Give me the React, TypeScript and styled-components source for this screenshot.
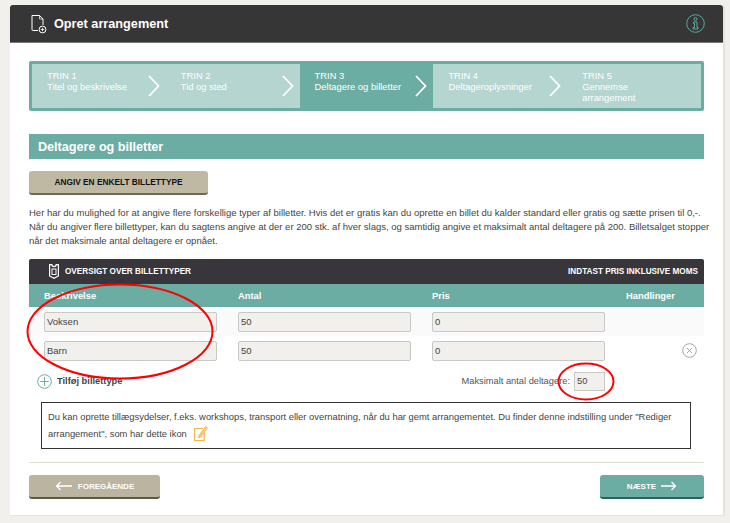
import React from 'react';
import styled, { createGlobalStyle } from 'styled-components';

const GlobalStyle = createGlobalStyle`
  html, body {
    margin: 0;
    padding: 0;
    background: #f1f0ec;
    font-family: "Liberation Sans", Arial, sans-serif;
    color: #444;
  }
`;

const steps = [
  { label: 'TRIN 1', title: 'Titel og beskrivelse' },
  { label: 'TRIN 2', title: 'Tid og sted' },
  { label: 'TRIN 3', title: 'Deltagere og billetter', active: true },
  { label: 'TRIN 4', title: 'Deltageroplysninger' },
  { label: 'TRIN 5', title: 'Gennemse arrangement' },
];

const rows = [
  { name: 'Voksen', count: '50', price: '0', shaded: true },
  { name: 'Barn', count: '50', price: '0', removable: true },
];

const App = () => {
  return (
    <>
      <GlobalStyle />
      <Page>
        <Card>
          <Header>
            <HeaderTitle>
              <svg width="16" height="20" viewBox="0 0 16 20" fill="none" stroke="#fff" strokeWidth="1">
                <path d="M7 16.500H2a1 1 0 0 1-1-1V1.500h7.500l3.500 3.500v6" />
                <path d="M8.500 1.500v3.500H12" strokeWidth="0.7" />
                <circle cx="11.500" cy="15.500" r="3.400" />
                <path d="M9.800 15.500h3.400M11.500 13.800v3.400" strokeWidth="0.8" />
              </svg>
              <h1>Opret arrangement</h1>
            </HeaderTitle>
            <svg width="19" height="19" viewBox="0 0 19 19" fill="none" stroke="#5aa9a0" strokeWidth="1">
              <circle cx="9.500" cy="9.500" r="8.800" />
              <circle cx="9.500" cy="5" r="1.500" />
              <path d="M7.500 8h3.500v5.500h1v1.500H7v-1.500h1.500V9.500h-1z" />
            </svg>
          </Header>

          <Content>
            <Stepper>
              {steps.map((step, i) => (
                <Step key={step.label} $active={step.active}>
                  <StepText>
                    {step.label}
                    <br />
                    {step.title}
                  </StepText>
                  {i < steps.length - 1 && (
                    <StepArrow width="12" height="22" viewBox="0 0 12 22" fill="none" stroke="#fff" strokeWidth="1.800">
                      <path d="M1 1l9.500 10L1 21" />
                    </StepArrow>
                  )}
                </Step>
              ))}
            </Stepper>

            <SectionTitle>Deltagere og billetter</SectionTitle>
            <SingleTicketButton>ANGIV EN ENKELT BILLETTYPE</SingleTicketButton>

            <Intro>
              Her har du mulighed for at angive flere forskellige typer af billetter. Hvis det er gratis kan du oprette en billet du kalder standard eller gratis og sætte prisen til 0,-.
              <br />
              Når du angiver flere billettyper, kan du sagtens angive at der er 200 stk. af hver slags, og samtidig angive et maksimalt antal deltagere på 200. Billetsalget stopper
              <br />
              når det maksimale antal deltagere er opnået.
            </Intro>

            <TableBar>
              <TableBarTitle>
                <svg width="10" height="15" viewBox="0 0 10 15" fill="none" stroke="#fff" strokeWidth="1.200">
                  <path d="M.6.600h2.200a2.200 2 0 0 0 4.400 0h2.200v11.400L5 14.300.6 12z" />
                  <rect x="3" y="5" width="4" height="5.500" strokeWidth="1" />
                </svg>
                OVERSIGT OVER BILLETTYPER
              </TableBarTitle>
              <span>INDTAST PRIS INKLUSIVE MOMS</span>
            </TableBar>
            <TableHead>
              <span>Beskrivelse</span>
              <span>Antal</span>
              <span>Pris</span>
              <span>Handlinger</span>
            </TableHead>
            {rows.map((row) => (
              <TicketRow key={row.name} $shaded={row.shaded}>
                <FieldBox>{row.name}</FieldBox>
                <FieldBox>{row.count}</FieldBox>
                <FieldBox>{row.price}</FieldBox>
                {row.removable && (
                  <RemoveIcon width="15" height="15" viewBox="0 0 15 15" fill="none" stroke="#a3a3a0" strokeWidth="1">
                    <circle cx="7.500" cy="7.500" r="6.800" />
                    <path d="M5 5l5 5M10 5l-5 5" />
                  </RemoveIcon>
                )}
              </TicketRow>
            ))}

            <AddRow>
              <AddLink>
                <svg width="15" height="15" viewBox="0 0 15 15" fill="none" stroke="#6bada3" strokeWidth="1">
                  <circle cx="7.500" cy="7.500" r="6.800" />
                  <path d="M7.500 3.200v8.600M3.200 7.500h8.600" />
                </svg>
                Tilføj billettype
              </AddLink>
              <MaxField>
                Maksimalt antal deltagere:
                <MaxInput>50</MaxInput>
              </MaxField>
            </AddRow>

            <Notice>
              Du kan oprette tillægsydelser, f.eks. workshops, transport eller overnatning, når du har gemt arrangementet. Du finder denne indstilling under "Rediger
              <br />
              arrangement", som har dette ikon
              <svg width="14" height="16" viewBox="0 0 14 16" fill="none" stroke="#f3b64f" strokeWidth="1.200">
                <path d="M9 3.500H.6v12h9.600V8" />
                <path d="M5 10.500l-.6 2.300 2.300-.7L13.400 3 11.800 1.400z" fill="#f6cf8a" strokeWidth="1" />
              </svg>
            </Notice>

            <Divider />

            <Footer>
              <NavButton $tone="sand">
                <svg width="18" height="10" viewBox="0 0 18 10" fill="none" stroke="#fff" strokeWidth="1.300">
                  <path d="M17 5H1.500M5.500 1L1.500 5l4 4" />
                </svg>
                FOREGÅENDE
              </NavButton>
              <NavButton $tone="teal">
                NÆSTE
                <svg width="16" height="10" viewBox="0 0 16 10" fill="none" stroke="#fff" strokeWidth="1.300">
                  <path d="M0 5h14.500M10.500 1l4 4-4 4" />
                </svg>
              </NavButton>
            </Footer>
          </Content>

          <Annotation width="713" height="510" viewBox="0 0 713 510" fill="none" stroke="#f00" strokeWidth="2">
            <ellipse cx="110" cy="326.500" rx="92.500" ry="47" />
            <ellipse cx="576" cy="376.500" rx="27.500" ry="18" />
          </Annotation>
        </Card>
      </Page>
    </>
  );
};

export default App;

const Page = styled.div`
  padding: 5px 0 8px 10px;
`;

const Card = styled.div`
  position: relative;
  box-sizing: border-box;
  width: 715px;
  height: 511px;
  background: #fff;
  border-right: 2px solid #e4e3de;
  border-bottom: 1px solid #e4e3de;
  border-radius: 3px 3px 0 0;
`;

const Header = styled.header`
  box-sizing: border-box;
  height: 38px;
  padding: 0 18px 0 21px;
  display: flex;
  align-items: center;
  justify-content: space-between;
  background: #363636;
  border-bottom: 1px solid #777;
  border-radius: 3px 3px 0 0;
`;

const HeaderTitle = styled.div`
  display: flex;
  align-items: center;
  gap: 7px;
  h1 {
    margin: 0;
    font-size: 12.700px;
    font-weight: 700;
    color: #fff;
  }
`;

const Content = styled.div`
  padding: 18px 19px 0;
`;

const Stepper = styled.div`
  display: flex;
  height: 50px;
  box-sizing: border-box;
  border: 3px solid #6bada3;
  border-radius: 2px;
  background: #b4d5d0;
`;

const Step = styled.div<{ $active?: boolean }>`
  position: relative;
  flex: 1;
  box-sizing: border-box;
  padding: 6px 26px 0 15px;
  background: ${(p) => (p.$active ? '#6bada3' : 'transparent')};
`;

const StepText = styled.div`
  font-size: 9.400px;
  line-height: 11px;
  color: #fff;
`;

const StepArrow = styled.svg`
  position: absolute;
  right: 6px;
  top: 11px;
`;

const SectionTitle = styled.h2`
  box-sizing: border-box;
  height: 25px;
  margin: 23px 0 12px;
  padding-left: 9px;
  font-size: 12.600px;
  font-weight: 700;
  line-height: 26px;
  color: #fff;
  background: #6bada3;
`;

const SingleTicketButton = styled.button`
  display: block;
  box-sizing: border-box;
  width: 179px;
  height: 24px;
  padding: 0;
  border: 0;
  border-bottom: 2px solid #6f6757;
  border-radius: 3px;
  font-family: inherit;
  font-size: 8.300px;
  font-weight: 700;
  color: #111;
  background: #bfb9a3;
`;

const Intro = styled.p`
  margin: 11px 0 11px;
  font-size: 9.500px;
  line-height: 14px;
  white-space: nowrap;
  color: #444;
`;

const TableBar = styled.div`
  box-sizing: border-box;
  height: 25px;
  padding: 0 6px 0 20px;
  display: flex;
  align-items: center;
  justify-content: space-between;
  font-size: 8.200px;
  font-weight: 700;
  color: #fff;
  background: #38363b;
  border-radius: 2px 2px 0 0;
`;

const TableBarTitle = styled.div`
  display: flex;
  align-items: center;
  gap: 6px;
`;

const ticketColumns = `
  display: grid;
  grid-template-columns: 173px 173px 173px 1fr;
  column-gap: 21px;
  padding-left: 15px;
`;

const TableHead = styled.div`
  ${ticketColumns}
  box-sizing: border-box;
  height: 23px;
  align-items: center;
  font-size: 9.400px;
  font-weight: 700;
  color: #fff;
  background: #6bada3;
`;

const TicketRow = styled.div<{ $shaded?: boolean }>`
  ${ticketColumns}
  position: relative;
  box-sizing: border-box;
  height: 29px;
  align-items: center;
  background: ${(p) => (p.$shaded ? '#fafafa' : '#fff')};
`;

const FieldBox = styled.div`
  box-sizing: border-box;
  height: 20px;
  padding-left: 2px;
  font-size: 9.500px;
  line-height: 18px;
  color: #444;
  background: #f1f0ec;
  border: 1px solid #c8c8c4;
  border-radius: 2px;
`;

const RemoveIcon = styled.svg`
  justify-self: start;
  margin-left: 56px;
`;

const AddRow = styled.div`
  display: flex;
  align-items: center;
  justify-content: space-between;
  height: 28px;
  padding: 2px 99px 0 8px;
  margin-bottom: 7px;
`;

const AddLink = styled.div`
  display: flex;
  align-items: center;
  gap: 5px;
  font-size: 9.300px;
  font-weight: 700;
  color: #444;
`;

const MaxField = styled.div`
  display: flex;
  align-items: center;
  gap: 4px;
  font-size: 9.300px;
  color: #555;
`;

const MaxInput = styled.div`
  box-sizing: border-box;
  width: 31px;
  height: 19px;
  padding-left: 2px;
  line-height: 17px;
  color: #444;
  background: #f1f0ec;
  border: 1px solid #c8c8c4;
`;

const Notice = styled.div`
  box-sizing: border-box;
  height: 47px;
  margin: 0 13px 0 12px;
  padding: 6px 6px 0 6px;
  font-size: 9.400px;
  line-height: 16px;
  white-space: nowrap;
  color: #444;
  border: 1px solid #333;
  svg {
    vertical-align: -4px;
    margin-left: 7px;
  }
`;

const Divider = styled.hr`
  height: 1px;
  margin: 13px 0 12px;
  border: 0;
  background: #e2e0d6;
`;

const Footer = styled.div`
  display: flex;
  justify-content: space-between;
`;

const NavButton = styled.button<{ $tone: 'sand' | 'teal' }>`
  box-sizing: border-box;
  width: ${(p) => (p.$tone === 'sand' ? '131px' : '104px')};
  height: 24px;
  padding: 0;
  display: flex;
  align-items: center;
  justify-content: center;
  gap: 5px;
  border: 0;
  border-bottom: 2px solid ${(p) => (p.$tone === 'sand' ? '#5f5848' : '#2f5f59')};
  border-radius: 3px;
  font-family: inherit;
  font-size: 8px;
  font-weight: 700;
  color: #fff;
  background: ${(p) => (p.$tone === 'sand' ? '#bab4a0' : '#6bada3')};
`;

const Annotation = styled.svg`
  position: absolute;
  left: 0;
  top: 0;
  pointer-events: none;
`;
